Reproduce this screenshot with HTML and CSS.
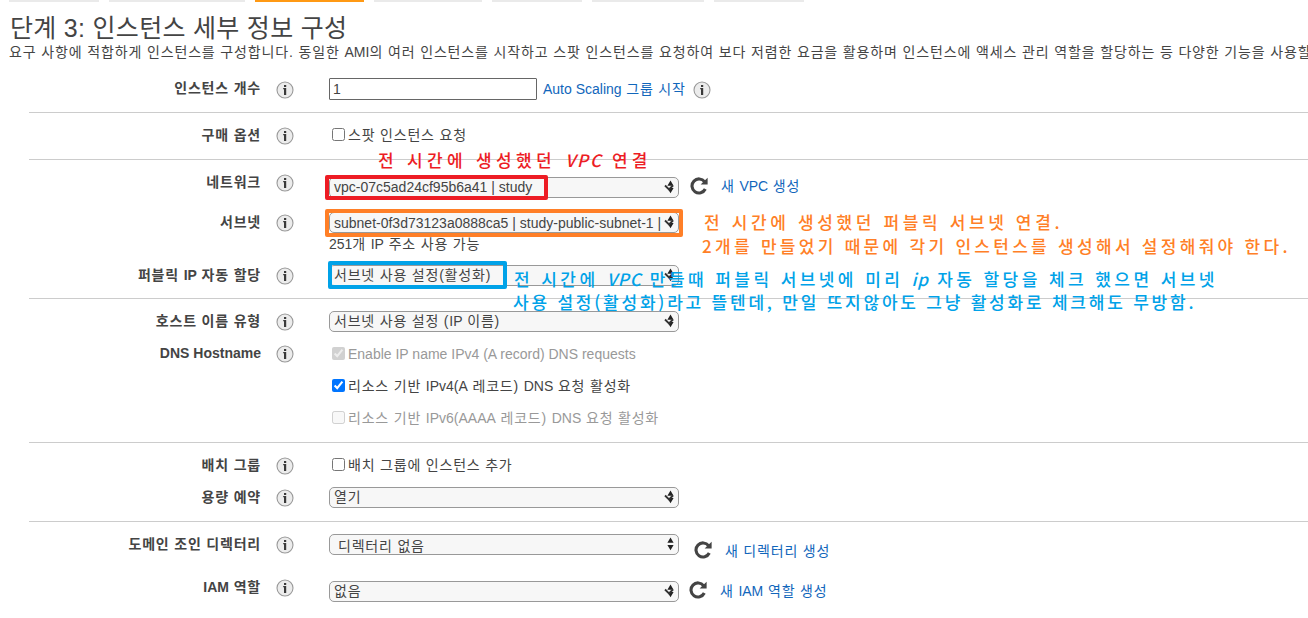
FILE: index.html
```html
<!DOCTYPE html>
<html lang="ko">
<head>
  <meta charset="UTF-8">
  <meta name="viewport" content="width=device-width, initial-scale=1.0">
  <title>단계 3: 인스턴스 세부 정보 구성</title>
  <link rel="stylesheet" href="styles.css">
</head>
<body>
  <svg class="sprite" width="0" height="0">
    <symbol id="info" viewBox="0 0 18 18">
      <circle cx="9" cy="9" r="8" fill="#ececec" stroke="#999" stroke-width="1.1"/>
      <path d="M7.2 7H10.2V14H8V8.3H7.2ZM8 4H10.2V6H8Z" fill="#3a3a3a"/>
    </symbol>
    <symbol id="arrows" viewBox="0 0 12 14">
      <path d="M6.5 0.5L9.6 5.8H3.4ZM3.4 8H9.6L6.5 13.3Z" fill="#222"/>
    </symbol>
    <symbol id="arrows-chevron" viewBox="0 0 12 14">
      <path d="M6.5 0.5L9.6 5.8H3.4ZM3.4 8H9.6L6.5 13.3Z" fill="#222"/>
      <path d="M1 5.5L5 9.4L9 5.5" fill="none" stroke="#333" stroke-width="1.9"/>
    </symbol>
    <symbol id="refresh" viewBox="0 0 18 18">
      <path d="M14.6 4.7A7 7 0 1 0 15.3 12" fill="none" stroke="#444" stroke-width="3.1"/>
      <path d="M17.6 0.8V7.6H10.6Z" fill="#444"/>
    </symbol>
  </svg>

  <div class="page">
    <nav class="tabs">
      <span class="tab w90"></span>
      <span class="tab w136"></span>
      <span class="tab w109 active"></span>
      <span class="tab w108"></span>
      <span class="tab w90"></span>
      <span class="tab w112"></span>
      <span class="tab w90"></span>
    </nav>

    <h1>단계 3: 인스턴스 세부 정보 구성</h1>
    <p class="desc">요구 사항에 적합하게 인스턴스를 구성합니다. 동일한 <span class="en">AMI</span>의 여러 인스턴스를 시작하고 스팟 인스턴스를 요청하여 보다 저렴한 요금을 활용하며 인스턴스에 액세스 관리 역할을 할당하는 등 다양한 기능을 사용할</p>

    <form class="form">
      <section class="group first">
        <div class="row count">
          <label>인스턴스 개수</label>
          <svg class="info"><use href="#info"/></svg>
          <div class="field">
            <input type="text" value="1">
            <a class="scaling"><span class="en">Auto Scaling</span> 그룹 시작</a>
            <svg class="info"><use href="#info"/></svg>
          </div>
        </div>
      </section>

      <section class="group">
        <div class="row purchase">
          <label>구매 옵션</label>
          <svg class="info"><use href="#info"/></svg>
          <div class="field check"><input type="checkbox"><span>스팟 인스턴스 요청</span></div>
        </div>
      </section>

      <section class="group">
        <div class="row network">
          <label>네트워크</label>
          <svg class="info"><use href="#info"/></svg>
          <div class="field">
            <div class="select en"><span>vpc-07c5ad24cf95b6a41 | study</span><svg><use href="#arrows-chevron"/></svg></div>
            <svg class="refresh"><use href="#refresh"/></svg>
            <a>새 <span class="en">VPC</span> 생성</a>
          </div>
        </div>
        <div class="row subnet">
          <label>서브넷</label>
          <svg class="info"><use href="#info"/></svg>
          <div class="field stack">
            <div class="select en"><span>subnet-0f3d73123a0888ca5 | study-public-subnet-1 |</span><svg><use href="#arrows-chevron"/></svg></div>
            <div class="hint"><span class="en">251</span>개 <span class="en">IP</span> 주소 사용 가능</div>
          </div>
        </div>
        <div class="row public-ip">
          <label>퍼블릭 <span class="en">IP</span> 자동 할당</label>
          <svg class="info"><use href="#info"/></svg>
          <div class="field">
            <div class="select"><span>서브넷 사용 설정(활성화)</span><svg><use href="#arrows-chevron"/></svg></div>
          </div>
        </div>
      </section>

      <section class="group">
        <div class="row host">
          <label>호스트 이름 유형</label>
          <svg class="info"><use href="#info"/></svg>
          <div class="field">
            <div class="select"><span>서브넷 사용 설정 (<span class="en">IP</span> 이름)</span><svg><use href="#arrows-chevron"/></svg></div>
          </div>
        </div>
        <div class="row dns">
          <label class="en">DNS Hostname</label>
          <svg class="info"><use href="#info"/></svg>
          <div class="field stack">
            <div class="check off"><input type="checkbox" checked disabled><span class="en">Enable IP name IPv4 (A record) DNS requests</span></div>
            <div class="check"><input type="checkbox" checked><span>리소스 기반 <span class="en">IPv4(A</span> 레코드) <span class="en">DNS</span> 요청 활성화</span></div>
            <div class="check off"><input type="checkbox" disabled><span>리소스 기반 <span class="en">IPv6(AAAA</span> 레코드) <span class="en">DNS</span> 요청 활성화</span></div>
          </div>
        </div>
      </section>

      <section class="group">
        <div class="row placement">
          <label>배치 그룹</label>
          <svg class="info"><use href="#info"/></svg>
          <div class="field check"><input type="checkbox"><span>배치 그룹에 인스턴스 추가</span></div>
        </div>
        <div class="row capacity">
          <label>용량 예약</label>
          <svg class="info"><use href="#info"/></svg>
          <div class="field">
            <div class="select"><span>열기</span><svg><use href="#arrows-chevron"/></svg></div>
          </div>
        </div>
      </section>

      <section class="group last">
        <div class="row directory">
          <label>도메인 조인 디렉터리</label>
          <svg class="info"><use href="#info"/></svg>
          <div class="field">
            <div class="select indent"><span>디렉터리 없음</span><svg><use href="#arrows"/></svg></div>
            <svg class="refresh"><use href="#refresh"/></svg>
            <a>새 디렉터리 생성</a>
          </div>
        </div>
        <div class="row iam">
          <label><span class="en">IAM</span> 역할</label>
          <svg class="info"><use href="#info"/></svg>
          <div class="field">
            <div class="select"><span>없음</span><svg><use href="#arrows-chevron"/></svg></div>
            <svg class="refresh"><use href="#refresh"/></svg>
            <a>새 <span class="en">IAM</span> 역할 생성</a>
          </div>
        </div>
      </section>
    </form>

    <!-- notes drawn over the form -->
    <svg class="notes" viewBox="0 0 1308 618">
      <g fill="none" stroke-width="4" stroke-linejoin="round">
        <rect x="327" y="177" width="219" height="21" stroke="#ed1c24"/>
        <rect x="327" y="211" width="354" height="24" stroke="#ff7f27"/>
        <rect x="330" y="263" width="175" height="24" stroke="#00a2e8"/>
      </g>
      <g class="red">
        <text x="378" y="167" textLength="274">전 시간에 생성했던 <tspan class="slant">VPC</tspan> 연결</text>
      </g>
      <g class="orange">
        <text x="704" y="229" textLength="360">전 시간에 생성했던 퍼블릭 서브넷 연결.</text>
        <text x="702" y="253" textLength="590">2개를 만들었기 때문에 각기 인스턴스를 생성해서 설정해줘야 한다.</text>
      </g>
      <g class="blue">
        <text x="514" y="286" textLength="705">전 시간에 <tspan class="slant">VPC</tspan> 만들때 퍼블릭 서브넷에 미리 <tspan class="slant">ip</tspan> 자동 할당을 체크 했으면 서브넷</text>
        <text x="513" y="309" textLength="685">사용 설정(활성화)라고 뜰텐데, 만일 뜨지않아도 그냥 활성화로 체크해도 무방함.</text>
      </g>
    </svg>
  </div>
</body>
</html>
```
FILE: styles.css
```css
* {
  box-sizing: border-box;
}

body {
  margin: 0;
  background: #fff;
  color: #444;
  font-family: "Liberation Sans", "Noto Sans CJK KR", sans-serif;
  font-size: 14px;
  line-height: 18px;
  letter-spacing: 0.8px;
  overflow: hidden;
}

.sprite {
  display: block;
}

.page {
  position: relative;
  width: 1308px;
  height: 618px;
  overflow: hidden;
}

.en {
  letter-spacing: 0;
}

a {
  color: #1166bb;
}

/* wizard tabs */
.tabs {
  display: flex;
  gap: 10px;
  height: 2px;
  padding-left: 9px;
}

.tab {
  background: #eaeaea;
}

.tab.active {
  background: #ff9914;
}

.w90 { width: 90px; }
.w108 { width: 108px; }
.w109 { width: 109px; }
.w112 { width: 112px; }
.w136 { width: 136px; }

h1 {
  margin: 0;
  padding: 11px 0 0 10px;
  font-size: 25px;
  line-height: 30px;
  font-weight: normal;
  letter-spacing: 0.3px;
}

.desc {
  margin: 0;
  padding-left: 9px;
  letter-spacing: 0.86px;
  white-space: nowrap;
}

/* form */
.form {
  padding: 10px 0 0 29px;
}

.group {
  padding-top: 4px;
  border-bottom: 1px solid #ccc;
}

.group.first {
  padding-top: 0;
}

.group.last {
  border-bottom: 0;
}

.row {
  display: flex;
  align-items: flex-start;
}

label {
  width: 232px;
  padding-top: 9px;
  font-weight: bold;
  text-align: right;
}

svg.info {
  width: 18px;
  height: 18px;
  margin: 10px 35px 0 15px;
  flex: none;
}

.field {
  display: flex;
  align-items: flex-start;
  padding-top: 8px;
}

.field.stack {
  flex-direction: column;
}

.select {
  display: flex;
  justify-content: space-between;
  width: 350px;
  height: 21px;
  padding: 0 2px 0 4px;
  border: 1px solid #999;
  border-radius: 5px;
  background: #f7f7f7;
  line-height: 19px;
  white-space: nowrap;
}

.select.indent {
  padding-left: 8px;
  line-height: 23px;
}

.select svg {
  width: 12px;
  height: 14px;
  margin-top: 2px;
  flex: none;
}

input[type="text"] {
  width: 208px;
  height: 22px;
  padding: 1px 3px;
  border: 1px solid #666;
  border-radius: 1px;
  font: inherit;
  color: #444;
}

input[type="checkbox"] {
  width: 13px;
  height: 13px;
  margin: 0 3px 2px 3px;
}

.check {
  display: flex;
  align-items: center;
  height: 18px;
}

.check.off {
  color: #999;
}

.refresh {
  width: 18px;
  height: 18px;
  margin: 0 13px 0 11px;
}

.count { height: 41px; }
.count label { padding-top: 8px; }
.count .field { padding-top: 7px; }
.count .scaling { margin: 2px 0 0 6px; }
.count .field .info { margin: 3px 0 0 7px; }

.purchase { height: 42px; }
.purchase .field,
.placement .field { height: 36px; padding-top: 0; }

.network { height: 40px; }
.network .field { padding-top: 13px; }

.subnet { height: 53px; }
.subnet .select { line-height: 20px; }
.hint { padding-top: 2px; }

.public-ip { height: 41px; }
.host { height: 32px; }

.dns { height: 107px; }
.dns .field { gap: 14px; padding-top: 10px; }

.placement { height: 32px; }
.capacity { height: 42px; }

.directory { height: 43px; }
.directory .refresh { margin: 7px 13px 0 15px; }
.directory a { margin-top: 8px; }

.iam { height: 45px; }
.iam .field { padding-top: 12px; }
.iam .refresh { margin: 0 13px 0 10px; }
.iam a { margin-top: 1px; }

/* overlay notes */
.notes {
  position: absolute;
  left: 0;
  top: 0;
  width: 1308px;
  height: 618px;
  font-family: "Noto Sans CJK KR", sans-serif;
  font-size: 17px;
  font-weight: 500;
  letter-spacing: 4.5px;
}

.notes .slant {
  font-style: italic;
  letter-spacing: 2px;
}

.red { fill: #ed1c24; }
.orange { fill: #ff7f27; }
.blue { fill: #00a2e8; }
```
